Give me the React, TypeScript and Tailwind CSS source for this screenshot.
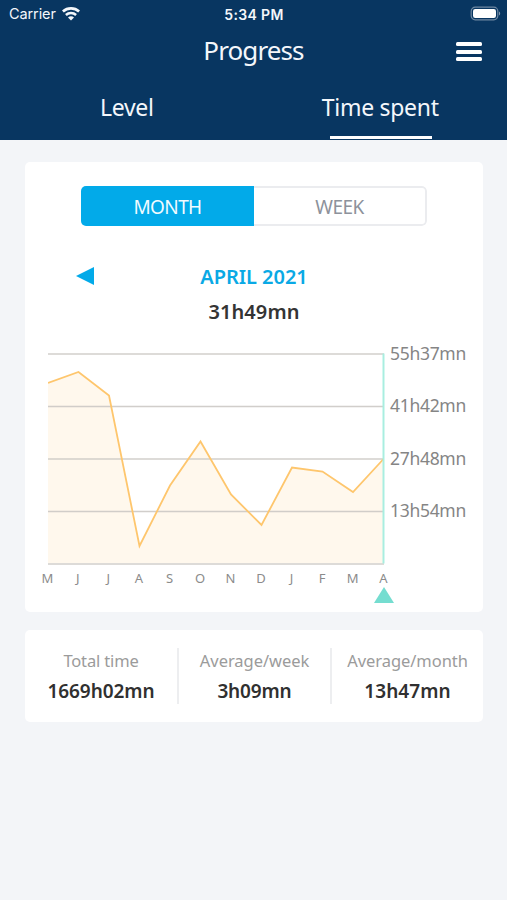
import clsx from "clsx";

const MONTHS = ["M", "J", "J", "A", "S", "O", "N", "D", "J", "F", "M", "A"];

// y offsets inside the 336x212 plot
const POINTS = [31, 20, 43.5, 194, 133.5, 89.5, 142.5, 173, 115.5, 119.5, 140, 107];

const AXIS_LABELS = ["55h37mn", "41h42mn", "27h48mn", "13h54mn"];

const STATS = [
  {
    label: "Total time",
    value: "1669h02mn",
    labelClass: "tracking-[-0.15px]",
    valueClass: "tracking-[-0.05px]",
  },
  {
    label: "Average/week",
    value: "3h09mn",
    labelClass: "tracking-[-0.05px]",
    valueClass: "tracking-[-0.15px]",
  },
  {
    label: "Average/month",
    value: "13h47mn",
    labelClass: "tracking-[-0.05px]",
    valueClass: "tracking-[0.05px]",
  },
];

export default function App() {
  return (
    <div className="h-[900px] w-[507px] overflow-hidden bg-[#f3f5f8] font-['Noto_Sans',sans-serif]">
      <Header />
      <main className="flex flex-col gap-[18px] pt-[22px] pr-6 pl-[25px]">
        <section className="h-[450px] rounded-[5px] bg-white pt-6">
          <PeriodSwitch />
          <PeriodTitle />
          <Chart />
        </section>
        <Stats />
      </main>
    </div>
  );
}

function Header() {
  return (
    <header className="h-[140px] bg-[#083661] text-[#f4f7fb]">
      <StatusBar />
      <div className="grid h-[46px] grid-cols-[1fr_auto_1fr] items-center pr-[25px]">
        <h1 className="col-start-2 -mt-[2px] pl-[25px] text-[26px] leading-[46px] tracking-[-0.9px]">
          Progress
        </h1>
        <button
          aria-label="Menu"
          className="mt-px flex flex-col gap-[3.5px] justify-self-end"
        >
          <span className="h-1 w-[26px] rounded-[1.5px] bg-white" />
          <span className="h-1 w-[26px] rounded-[1.5px] bg-white" />
          <span className="h-1 w-[26px] rounded-[1.5px] bg-white" />
        </button>
      </div>
      <nav className="grid h-[66px] grid-cols-2 text-center text-[23px]">
        <button className="flex flex-col items-center tracking-[-0.3px]">
          <span className="mt-[17px] leading-8">Level</span>
        </button>
        <button className="flex flex-col items-center justify-between tracking-[-0.3px]">
          <span className="mt-[17px] leading-8">Time spent</span>
          <span className="mb-px ml-px h-[3px] w-[102px] bg-white" />
        </button>
      </nav>
    </header>
  );
}

function StatusBar() {
  return (
    <div className="grid h-7 grid-cols-3 items-center pr-[6px] pl-[9px] font-['Inter',sans-serif] text-[14.5px]">
      <div className="flex items-center gap-[6px]">
        <span className="tracking-[-0.1px]">Carrier</span>
        <svg width="18" height="14" viewBox="0 0 18 14" fill="none">
          <path
            d="M.9 4.6C5.5.4 12.5.4 17.1 4.6"
            stroke="currentColor"
            strokeWidth="2.7"
          />
          <path
            d="M3.9 8C6.8 5.3 11.2 5.3 14.1 8"
            stroke="currentColor"
            strokeWidth="2.5"
          />
          <path d="M6 10.4C7.7 8.8 10.3 8.8 12 10.4L9 13.5Z" fill="currentColor" />
        </svg>
      </div>
      <span className="-ml-[2px] text-center text-[14px] font-semibold tracking-[0.35px]">
        5:34 PM
      </span>
      <svg
        className="-mt-[2px] justify-self-end"
        width="31"
        height="15"
        viewBox="0 0 31 15"
        fill="none"
      >
        <rect
          x="1.2"
          y="1.2"
          width="26.6"
          height="12.6"
          rx="4"
          stroke="#6f88a2"
          strokeWidth="1.2"
        />
        <rect x="3" y="3" width="23" height="9" rx="2.2" fill="#fff" />
        <path d="M29 5.5C30.6 6.2 30.6 8.8 29 9.5Z" fill="#8196ad" />
      </svg>
    </div>
  );
}

function PeriodSwitch() {
  return (
    <div className="ml-14 grid h-10 w-[346px] grid-cols-2 overflow-hidden rounded-[5px] text-[19px]">
      <button className="bg-[#02aae9] pt-[2px] tracking-[-0.6px] text-[#f1fbff]">
        MONTH
      </button>
      <button className="rounded-r-[5px] border-2 border-l-0 border-[#ebecef] pt-[2px] tracking-[-0.5px] text-[#8d929b]">
        WEEK
      </button>
    </div>
  );
}

function PeriodTitle() {
  return (
    <div className="mt-[33px] grid grid-cols-[1fr_auto_1fr] text-center text-[20px] font-semibold">
      <button aria-label="Previous month" className="mt-2 ml-[51px] self-start">
        <svg width="18" height="18" viewBox="0 0 18 18">
          <path d="M0 9L18 0V18Z" fill="#02aae9" />
        </svg>
      </button>
      <div>
        <h2 className="leading-[36px] tracking-[-0.05px] text-[#0aa9e5]">
          APRIL 2021
        </h2>
        <p className="leading-[34px] tracking-[0.1px] text-[#343434]">31h49mn</p>
      </div>
    </div>
  );
}

function Chart() {
  const step = 335.5 / (POINTS.length - 1);
  const line = POINTS.map((y, i) => `${i * step},${y}`).join(" ");

  return (
    <div className="mt-[23px] ml-[23px]">
      <div className="flex h-[213px] gap-[5px]">
        <svg width="337" height="214" viewBox="0 0 337 214" fill="none">
          <polygon points={`0,211 ${line} 335.5,211`} fill="#fff8ed" />
          {[2, 54.5, 107, 159.5, 212].map((y) => (
            <path
              key={y}
              d={`M0 ${y}H336`}
              stroke="#c9c6c2"
              strokeWidth="1.6"
              strokeOpacity={0.85}
            />
          ))}
          <polyline points={line} stroke="#fec66d" strokeWidth="1.8" />
          <path d="M335.5 1.5V211.5" stroke="#a9eee0" strokeWidth="2" />
        </svg>
        <div className="-mt-[15px] flex flex-col text-[17.5px] tracking-[-0.3px] text-[#858585]">
          {AXIS_LABELS.map((label) => (
            <span key={label} className="h-[52.4px] leading-8">
              {label}
            </span>
          ))}
        </div>
      </div>
      <div className="-ml-[16px] flex text-[13px] leading-[26px] text-[#8b8b8b]">
        {MONTHS.map((month, i) => (
          <span key={i} className="w-[30.55px] text-center">
            {month}
          </span>
        ))}
      </div>
      <svg
        className="-mt-1 ml-[326px]"
        width="20"
        height="17"
        viewBox="0 0 20 17"
      >
        <path d="M10 0L20 16H0Z" fill="#75ddd0" />
      </svg>
    </div>
  );
}

function Stats() {
  return (
    <section className="grid h-[92px] grid-cols-[154px_153px_151px] rounded-[5px] bg-white pt-[18px] pb-[18px] text-center">
      {STATS.map(({ label, value, labelClass, valueClass }, i) => (
        <div
          key={label}
          className={clsx(
            "h-14",
            i < STATS.length - 1 && "border-r-2 border-[#edeef0]",
          )}
        >
          <div
            className={clsx(
              "text-[16.5px] leading-[25px] whitespace-nowrap text-[#9b9b9b]",
              labelClass,
            )}
          >
            {label}
          </div>
          <div
            className={clsx(
              "mt-[2px] text-[19px] leading-[32px] font-semibold text-[#303030]",
              valueClass,
            )}
          >
            {value}
          </div>
        </div>
      ))}
    </section>
  );
}
